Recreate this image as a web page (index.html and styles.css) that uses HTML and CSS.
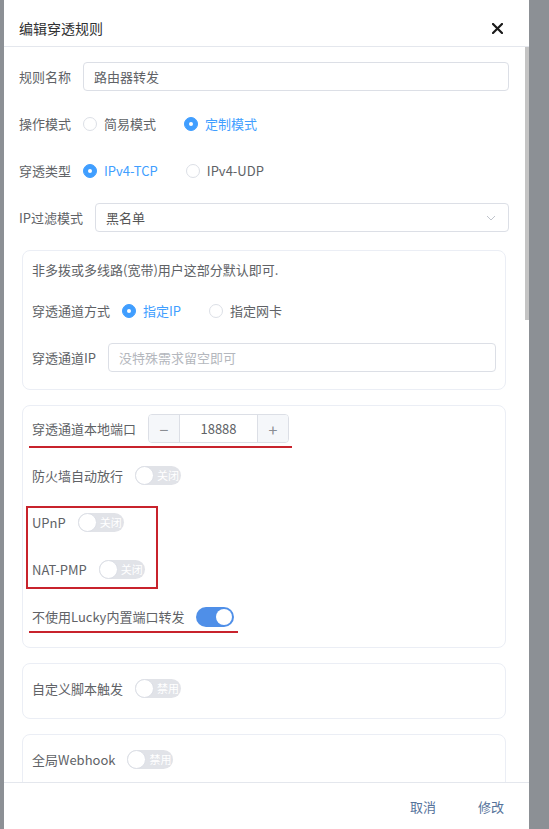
FILE: index.html
```html
<!DOCTYPE html>
<html lang="zh-CN">
<head>
    <meta charset="UTF-8">
    <meta name="viewport" content="width=device-width, initial-scale=1.0">
    <title>编辑穿透规则</title>
    <link rel="stylesheet" href="styles.css">
</head>
<body>
    <div class="dialog">
        <div class="dialog-header">
            <span class="dialog-title">编辑穿透规则</span>
            <button class="close-btn" aria-label="关闭">
                <svg width="11" height="11" viewBox="0 0 11 11"><path d="M1 1L10 10M10 1L1 10" stroke="#1a1a1a" stroke-width="2.2" stroke-linecap="round"/></svg>
            </button>
        </div>

        <div class="dialog-body">
            <div class="form">
                <div class="form-row">
                    <label>规则名称</label>
                    <input class="input" type="text" value="路由器转发">
                </div>

                <div class="form-row">
                    <label>操作模式</label>
                    <span class="radio"><span class="radio-dot"></span>简易模式</span>
                    <span class="radio checked"><span class="radio-dot"></span>定制模式</span>
                </div>

                <div class="form-row">
                    <label>穿透类型</label>
                    <span class="radio checked"><span class="radio-dot"></span>IPv4-TCP</span>
                    <span class="radio"><span class="radio-dot"></span>IPv4-UDP</span>
                </div>

                <div class="form-row">
                    <label>IP过滤模式</label>
                    <div class="select">
                        <span>黑名单</span>
                        <svg width="10" height="6" viewBox="0 0 10 6"><path d="M1 1L5 5L9 1" fill="none" stroke="#c0c4cc" stroke-width="1"/></svg>
                    </div>
                </div>

                <!-- 通道设置 -->
                <div class="card card-tunnel">
                    <div class="card-note">非多拨或多线路(宽带)用户这部分默认即可.</div>
                    <div class="form-row">
                        <label>穿透通道方式</label>
                        <span class="radio checked"><span class="radio-dot"></span>指定IP</span>
                        <span class="radio"><span class="radio-dot"></span>指定网卡</span>
                    </div>
                    <div class="form-row">
                        <label>穿透通道IP</label>
                        <input class="input" type="text" placeholder="没特殊需求留空即可">
                    </div>
                </div>

                <!-- 端口设置 -->
                <div class="card card-port">
                    <div class="form-row marked port-row">
                        <label>穿透通道本地端口</label>
                        <div class="number">
                            <span class="num-btn minus">−</span>
                            <span class="num-value">18888</span>
                            <span class="num-btn plus">+</span>
                        </div>
                    </div>
                    <div class="form-row">
                        <label>防火墙自动放行</label>
                        <span class="switch"><span class="knob"></span><span class="switch-text">关闭</span></span>
                    </div>
                    <div class="mark-box">
                        <div class="form-row">
                            <label>UPnP</label>
                            <span class="switch"><span class="knob"></span><span class="switch-text">关闭</span></span>
                        </div>
                        <div class="form-row">
                            <label>NAT-PMP</label>
                            <span class="switch"><span class="knob"></span><span class="switch-text">关闭</span></span>
                        </div>
                    </div>
                    <div class="form-row marked lucky-row">
                        <label>不使用Lucky内置端口转发</label>
                        <span class="switch on"><span class="knob"></span></span>
                    </div>
                </div>

                <div class="card card-single">
                    <div class="form-row">
                        <label>自定义脚本触发</label>
                        <span class="switch"><span class="knob"></span><span class="switch-text">禁用</span></span>
                    </div>
                </div>

                <div class="card card-single">
                    <div class="form-row">
                        <label>全局Webhook</label>
                        <span class="switch"><span class="knob"></span><span class="switch-text">禁用</span></span>
                    </div>
                </div>
            </div>
        </div>

        <div class="scroll-thumb"></div>

        <div class="dialog-footer">
            <button class="text-btn">取消</button>
            <button class="text-btn">修改</button>
        </div>
    </div>
</body>
</html>
```

FILE: styles.css
```css
body {
    margin: 0;
    background-color: #8c9095;
    font-family: "Noto Sans CJK SC", "Liberation Sans", sans-serif;
    font-size: 13px;
    color: #606266;
    overflow: hidden;
}

.dialog {
    position: relative;
    margin-left: 4px;
    width: 525px;
    height: 100vh;
    background-color: #fff;
    display: flex;
    flex-direction: column;
}

.dialog-header {
    box-sizing: border-box;
    height: 47px;
    padding: 10px 26px 0 15px;
    border-bottom: 1px solid #e4e7ed;
    display: flex;
    align-items: center;
    justify-content: space-between;
}

.dialog-title {
    font-size: 14px;
    color: #303133;
}

.close-btn {
    border: none;
    background: none;
    padding: 0;
    display: flex;
}

.dialog-body {
    flex: 1;
    overflow: hidden;
    padding: 15px 20px 0 15px;
}

/* scrollbar thumb drawn over the body edge */
.scroll-thumb {
    position: absolute;
    top: 47px;
    right: 0;
    width: 4px;
    height: 273px;
    background-color: #c4c4c4;
}

.form-row {
    display: flex;
    align-items: center;
    height: 29px;
    margin-bottom: 18px;
    gap: 12px;
}

.form-row label {
    white-space: nowrap;
}

.input {
    flex: 1;
    box-sizing: border-box;
    height: 29px;
    border: 1px solid #dcdfe6;
    border-radius: 4px;
    padding: 0 10px;
    font: inherit;
    color: #606266;
    outline: none;
}

.input::placeholder {
    color: #b4b7bd;
}

.radio {
    display: inline-flex;
    align-items: center;
    gap: 7px;
    margin-right: 16px;
    white-space: nowrap;
}

.radio-dot {
    box-sizing: border-box;
    width: 14px;
    height: 14px;
    border: 1px solid #dcdfe6;
    border-radius: 50%;
    display: flex;
    align-items: center;
    justify-content: center;
}

.radio.checked {
    color: #409eff;
}

.radio.checked .radio-dot {
    background-color: #409eff;
    border-color: #409eff;
}

.radio.checked .radio-dot::after {
    content: "";
    width: 4px;
    height: 4px;
    border-radius: 50%;
    background-color: #fff;
}

.select {
    flex: 1;
    box-sizing: border-box;
    height: 29px;
    border: 1px solid #dcdfe6;
    border-radius: 4px;
    padding: 0 12px 0 10px;
    display: flex;
    align-items: center;
    justify-content: space-between;
    color: #555;
}

.card {
    border: 1px solid #ebeef5;
    border-radius: 8px;
    margin: 0 3px 15px;
    padding: 10px 9px 17px;
}

.card .form-row:last-child {
    margin-bottom: 0;
}

.card-note {
    line-height: 18px;
    margin-bottom: 17px;
}

.card-port {
    padding: 8px 9px 14px;
}

.card-single {
    padding: 10px 9px 15px;
}

/* red annotation marks */
.marked {
    align-self: flex-start;
    width: fit-content;
    border-bottom: 2px solid #c8232c;
    margin-left: -3px;
}

.port-row {
    height: auto;
    padding: 0 3px 3px;
    margin-bottom: 13px;
}

.card .lucky-row {
    height: 29px;
    padding: 0 4px 0 3px;
    margin-bottom: -2px;
}

.mark-box {
    width: fit-content;
    border: 2px solid #c8232c;
    margin: -2px 0 13px -6px;
    padding: 0 11px 3px 4px;
}

.mark-box .form-row:last-child {
    margin-bottom: 0;
}

.number {
    display: flex;
    box-sizing: border-box;
    width: 141px;
    height: 29px;
    border: 1px solid #dcdfe6;
    border-radius: 4px;
    overflow: hidden;
}

.num-btn {
    width: 30px;
    background-color: #f5f7fa;
    display: flex;
    align-items: center;
    justify-content: center;
    font-size: 16px;
    color: #8a8d93;
}

.minus {
    border-right: 1px solid #dcdfe6;
}

.plus {
    border-left: 1px solid #dcdfe6;
}

.num-value {
    flex: 1;
    text-align: center;
    line-height: 27px;
}

.switch {
    display: inline-flex;
    align-items: center;
    box-sizing: border-box;
    width: 46px;
    height: 19px;
    border-radius: 10px;
    background-color: #e1e3e8;
}

.knob {
    box-sizing: border-box;
    width: 19px;
    height: 19px;
    border-radius: 50%;
    background-color: #fff;
    border: 1px solid #dcdfe6;
}

.switch-text {
    font-size: 11px;
    color: #fff;
    margin-left: 3px;
    line-height: 19px;
}

.switch.on {
    width: 38px;
    height: 20px;
    background-color: #4f8fe8;
    justify-content: flex-end;
    padding-right: 2px;
}

.switch.on .knob {
    width: 16px;
    height: 16px;
    border: none;
}

.dialog-footer {
    box-sizing: border-box;
    border-top: 1px solid #e4e7ed;
    height: 47px;
    padding: 15px 25px 0 0;
    display: flex;
    justify-content: flex-end;
    align-items: flex-start;
    gap: 42px;
}

.text-btn {
    border: none;
    background: none;
    padding: 0;
    font-family: inherit;
    font-size: 13px;
    line-height: 18px;
    color: #55729a;
}
```
